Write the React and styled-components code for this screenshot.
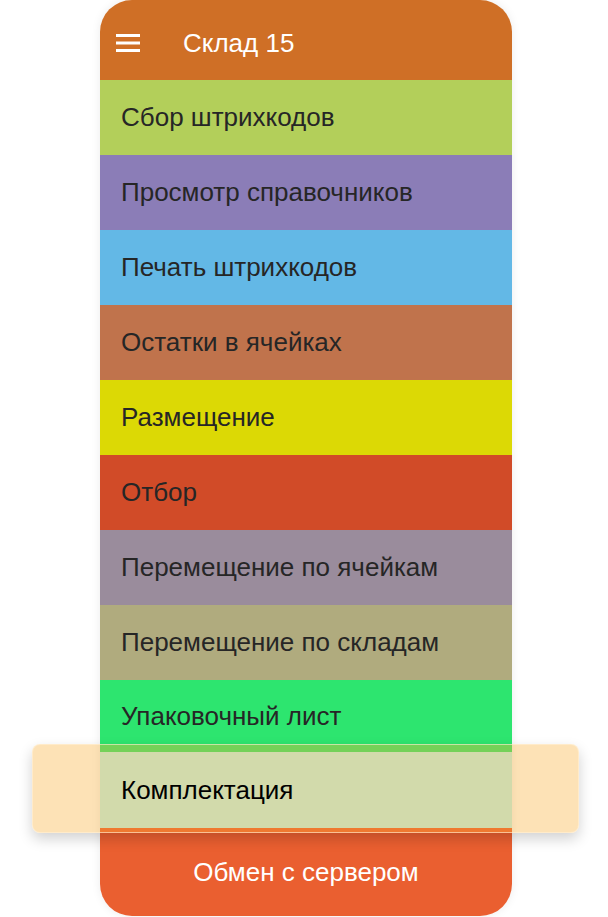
import React from 'react';
import styled, { createGlobalStyle } from 'styled-components';

const GlobalStyle = createGlobalStyle`
  html, body {
    margin: 0;
    padding: 0;
    background: #ffffff;
    font-family: "Liberation Sans", Arial, sans-serif;
  }
`;

const Page = styled.div`
  width: 608px;
  height: 917px;
  display: flex;
  justify-content: flex-start;
  padding-left: 100px;
  box-sizing: border-box;
`;

const Phone = styled.div`
  width: 412px;
  height: 916px;
  display: flex;
  flex-direction: column;
  border-radius: 32px;
  overflow: visible;
  box-shadow: 0 0 10px rgba(0, 0, 0, 0.08);
`;

const Header = styled.div`
  height: 80px;
  flex-shrink: 0;
  display: flex;
  align-items: center;
  padding: 6px 0 0 16px;
  box-sizing: border-box;
  background: #cf6f26;
  border-radius: 32px 32px 0 0;
  color: #ffffff;
`;

const Title = styled.div`
  margin-left: 43px;
  font-size: 26px;
  line-height: 1;
`;

const MenuRow = styled.div`
  position: ${(p) => (p.selected ? 'relative' : 'static')};
  z-index: ${(p) => (p.selected ? 1 : 'auto')};
  height: ${(p) => p.h}px;
  flex-shrink: 0;
  display: flex;
  align-items: center;
  padding-left: 21px;
  background: ${(p) => p.bg};
  color: ${(p) => (p.selected ? '#000000' : '#262626')};
  font-size: 26px;

  ${(p) =>
    p.selected &&
    `
    &::before {
      content: '';
      position: absolute;
      z-index: -1;
      top: -8px;
      bottom: -5px;
      left: -68px;
      right: -67px;
      border-radius: 8px;
      background: rgba(249, 172, 46, 0.35);
      border: 1px solid rgba(255, 240, 215, 0.6);
      box-shadow: 0 6px 14px rgba(0, 0, 0, 0.18);
    }
  `}
`;

const SyncButton = styled.div`
  flex: 1;
  display: flex;
  align-items: center;
  justify-content: center;
  background: #ea5f30;
  border-radius: 0 0 32px 32px;
  color: #ffffff;
  font-size: 26px;
`;

const MenuIcon = () => (
  <svg width="24" height="18" viewBox="0 0 24 18">
    <rect x="0" y="0" width="24" height="3" fill="#fff" />
    <rect x="0" y="7.5" width="24" height="3" fill="#fff" />
    <rect x="0" y="15" width="24" height="3" fill="#fff" />
  </svg>
);

const items = [
  { label: 'Сбор штрихкодов', bg: '#b3cf5a', h: 75 },
  { label: 'Просмотр справочников', bg: '#8b7db7', h: 75 },
  { label: 'Печать штрихкодов', bg: '#63b8e6', h: 75 },
  { label: 'Остатки в ячейках', bg: '#c0734c', h: 75 },
  { label: 'Размещение', bg: '#dcd905', h: 75 },
  { label: 'Отбор', bg: '#d14b28', h: 75 },
  { label: 'Перемещение по ячейкам', bg: '#9a8c9c', h: 75 },
  { label: 'Перемещение по складам', bg: '#b0ab7e', h: 75 },
  { label: 'Упаковочный лист', bg: '#2de56f', h: 72 },
  { label: 'Комплектация', bg: '#bdf3ee', h: 76, selected: true },
];

export default function App() {
  return (
    <>
      <GlobalStyle />
      <Page>
        <Phone>
          <Header>
            <MenuIcon />
            <Title>Склад 15</Title>
          </Header>
          {items.map((item) => (
            <MenuRow key={item.label} bg={item.bg} h={item.h} selected={item.selected}>
              {item.label}
            </MenuRow>
          ))}
          <SyncButton>Обмен с сервером</SyncButton>
        </Phone>
      </Page>
    </>
  );
}
